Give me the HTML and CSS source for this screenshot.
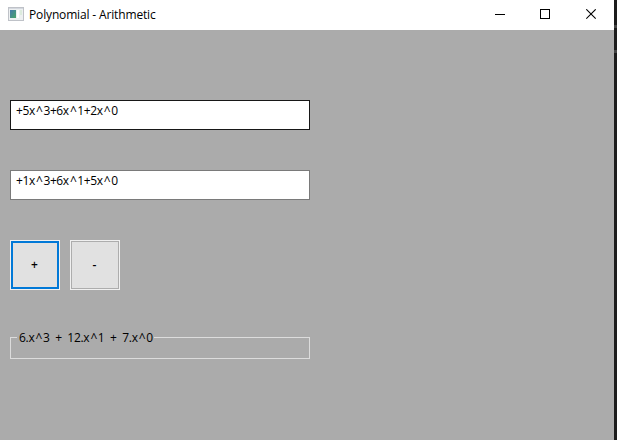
FILE: index.html
```html
<!DOCTYPE html>
<html lang="en">
<head>
<meta charset="utf-8">
<title>Polynomial - Arithmetic</title>
<link rel="stylesheet" href="styles.css">
</head>
<body>
<div class="window">
  <header class="titlebar">
    <svg class="app-icon" width="16" height="14" viewBox="0 0 16 14" aria-hidden="true">
      <defs><linearGradient id="screen" x1="0" y1="0" x2="1" y2="1"><stop offset="0" stop-color="#4779ad"/><stop offset="1" stop-color="#48a568"/></linearGradient></defs>
      <rect x=".5" y=".5" width="15" height="13" fill="#edf0f1" stroke="#bfc2c8"/>
      <rect x="1" y="1" width="14" height="1" fill="#d4d8df"/>
      <rect x="2" y="3" width="6" height="8" fill="url(#screen)"/>
      <rect x="9" y="3" width="2" height="8" fill="#fff"/>
      <rect x="12" y="3" width="2" height="5" fill="#dcebdd"/>
    </svg>
    <h1 class="title">Polynomial - Arithmetic</h1>
    <div class="controls">
      <svg class="control" width="11" height="11" viewBox="0 0 11 11" shape-rendering="crispEdges"><path d="M0 5.5h10" stroke="#000" fill="none"/></svg>
      <svg class="control" width="12" height="11" viewBox="0 0 12 11" shape-rendering="crispEdges"><path d="M.5.5h9v9h-9z" stroke="#000" fill="none"/></svg>
      <svg class="control" width="11" height="11" viewBox="0 0 11 11"><path d="M.3.3l9.4 9.4M9.7.3L.3 9.7" stroke="#000" stroke-width="1.1" fill="none"/></svg>
    </div>
  </header>
  <main class="content">
    <div class="field field-active"><span class="text">+5x<span class="caret">^</span>3+6x<span class="caret">^</span>1+2x<span class="caret">^</span>0</span></div>
    <div class="field"><span class="text">+1x<span class="caret">^</span>3+6x<span class="caret">^</span>1+5x<span class="caret">^</span>0</span></div>
    <div class="buttons">
      <button class="button button-default">+</button>
      <button class="button">-</button>
    </div>
    <div class="result"><div class="line-start"></div><span class="result-text">6.x<span class="caret">^</span>3  +  12.x<span class="caret">^</span>1  +  7.x<span class="caret">^</span>0</span><div class="line-end"></div></div>
    <div class="result-box"></div>
  </main>
</div>
<div class="edge"></div>
</body>
</html>
```

FILE: styles.css
```css
* { box-sizing: border-box; }
body {
  margin: 0;
  width: 617px;
  height: 440px;
  display: flex;
  overflow: hidden;
  background: #ababab;
  color: #000;
  font: 12px/16px "Open Sans", "Noto Sans", sans-serif;
}
.window { width: 614px; height: 440px; }
.edge {
  width: 3px;
  height: 440px;
  background: linear-gradient(#444, #444) 0 25px / 3px 3px no-repeat, linear-gradient(#444, #444) 0 50px / 3px 3px no-repeat, #1c1c1c;
}
.titlebar { display: flex; height: 30px; background: #fff; }
.app-icon { margin: 7px 5px 0 8px; }
.title { margin: 7px 0 0; font-size: 12px; font-weight: 400; line-height: 16px; letter-spacing: -0.15px; white-space: nowrap; }
.controls { display: flex; gap: 34px; margin: 9px 17px 0 auto; }
.control { display: block; }
.content { padding: 70px 10px 0; }
.field {
  width: 300px;
  height: 30px;
  margin-bottom: 40px;
  padding: 2px 5px;
  border: 1px solid #7a7a7a;
  background: #fff;
}
.field-active { border-color: #171717; }
.text { letter-spacing: -0.37px; }
.caret { padding: 0 0.8px 0 1.2px; }
.buttons { display: flex; gap: 10px; margin-bottom: 40px; }
.button {
  width: 50px;
  height: 50px;
  padding: 0 1px 0 0;
  border: 1px solid #f0f0f0;
  background: #e1e1e1;
  box-shadow: inset 0 0 0 1px #adadad;
  color: #000;
  font: inherit;
  font-weight: 600;
}
.button-default { box-shadow: inset 0 0 0 2px #0078d7; }
.result { display: flex; width: 300px; height: 16px; margin-bottom: -8px; }
.line-start { width: 7px; height: 9px; margin-top: 7px; border: solid #dcdcdc; border-width: 1px 0 0 1px; }
.line-end { flex: 1; height: 9px; margin-top: 7px; border: solid #dcdcdc; border-width: 1px 1px 0 0; }
.result-text { width: 137px; padding-left: 2px; white-space: pre; letter-spacing: -0.3px; }
.result-box { width: 300px; height: 21px; border: solid #dcdcdc; border-width: 0 1px 1px; }
```
